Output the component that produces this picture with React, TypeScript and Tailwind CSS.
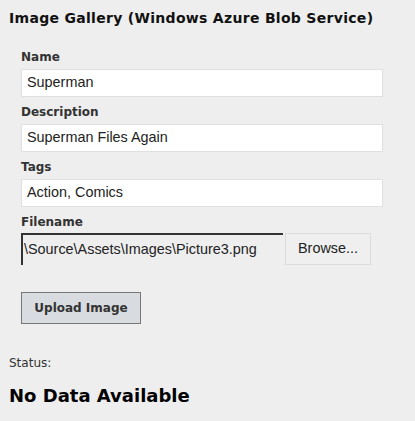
import React from "react";

const fields = [
  { label: "Name", value: "Superman" },
  { label: "Description", value: "Superman Files Again" },
  { label: "Tags", value: "Action, Comics" },
];

const App = () => {
  return (
    <div className="min-h-[421px] w-[415px] bg-[#eeeeee] px-[9px] pt-[10px] font-['DejaVu_Sans',Verdana,sans-serif] text-[#333]">
      <h1 className="text-[14px] font-bold leading-[16px] tracking-[0.3px] text-[#111]">
        Image Gallery (Windows Azure Blob Service)
      </h1>

      <div className="mt-[24px] pl-[12px]">
        {fields.map((f) => (
          <div key={f.label} className="mb-[8px]">
            <div className="text-[12px] font-bold leading-[14px]">{f.label}</div>
            <div className="mt-[5px] flex h-[28px] w-[362px] items-center border border-[#e0e0e0] bg-white px-[5px] font-['Liberation_Sans',Arial,sans-serif] text-[14.4px] text-[#222]">
              {f.value}
            </div>
          </div>
        ))}

        <div className="text-[12px] font-bold leading-[14px]">Filename</div>
        <div className="mt-[4px] flex h-[32px] items-stretch gap-[2px] font-['Liberation_Sans',Arial,sans-serif] text-[14.4px] text-[#222]">
          <div className="flex w-[262px] items-center overflow-hidden whitespace-nowrap border-l-2 border-t-2 border-l-[#333] border-t-[#333] bg-[#eeeeee] pl-[1px]">
            \Source\Assets\Images\Picture3.png
          </div>
          <div className="flex w-[86px] items-center justify-center border border-[#dcdcdc] bg-[#efefef]">
            Browse...
          </div>
        </div>

        <button className="mt-[27px] h-[32px] w-[120px] border border-[#777] bg-[#d8dbe0] text-[12px] font-bold text-[#333]">
          Upload Image
        </button>
      </div>

      <div className="mt-[32px] text-[12px] leading-[14px] text-[#333]">Status:</div>
      <div className="mt-[15px] text-[18px] font-bold leading-[22px] text-black">
        No Data Available
      </div>
    </div>
  );
};

export default App;
